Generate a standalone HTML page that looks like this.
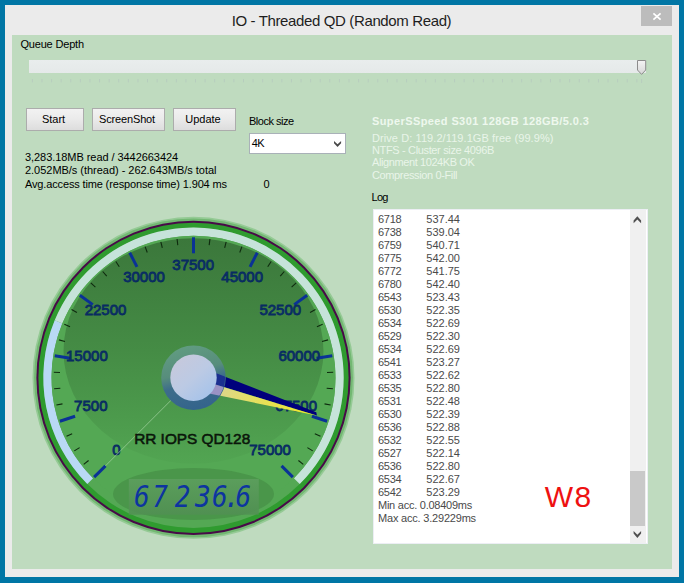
<!DOCTYPE html>
<html lang="en"><head><meta charset="utf-8"><title>IO - Threaded QD (Random Read)</title>
<style>
html,body{margin:0;padding:0}
body{width:684px;height:583px;overflow:hidden;position:relative;background:#0076a5;font-family:"Liberation Sans",Arial,sans-serif;font-size:11px;color:#000}
#frame{position:absolute;left:5px;top:5px;width:674px;height:572px;background:#ebebeb}
#content{position:absolute;left:12.3px;top:35.4px;width:659.3px;height:533.5px;background:#bfdbbf}
#close{position:absolute;left:641px;top:6px;width:31px;height:20px;background:#bcbcbc}
.btn{position:absolute;top:108px;height:21px;box-sizing:content-box;border:1px solid #acacac;background:linear-gradient(#f2f2f2,#ebebeb 45%,#dddddd);text-align:center;font-size:11px;line-height:20px;color:#000}
#track{position:absolute;left:28.5px;top:59.5px;width:617.5px;height:13.8px;background:linear-gradient(#e9eded,#e5e9e9)}
#combo{position:absolute;left:249px;top:133px;width:95px;height:19px;border:1px solid #a9b1b8;background:#fff}
#log{position:absolute;left:372.5px;top:209.3px;width:275px;height:335px;background:#fff;overflow:hidden;box-shadow:inset 0 0 0 1px #eceef4}
#log pre{margin:0;position:absolute;left:5.5px;top:4px;font-family:"Liberation Sans",Arial,sans-serif;font-size:11px;line-height:13px;color:#4a4a4a;}
#log pre i{display:inline-block;width:48.3px;font-style:normal;letter-spacing:-0.25px}
#sb{position:absolute;left:257.7px;top:1px;width:15.8px;height:333px;background:#f0f0f0}
#thumb{position:absolute;left:0;top:260.5px;width:14.7px;height:55.2px;background:#c9c9c9}
</style></head><body>
<div id="frame"></div><div id="content"></div>
<div style="position:absolute;white-space:pre;left:231.7px;top:11.60px;font-size:15px;line-height:18px;color:#1e1e1e;letter-spacing:-0.37px;">IO - Threaded QD (Random Read)</div>
<div id="close"><svg width="31" height="20" viewBox="0 0 31 20"><path d="M12.4,7.3 L19.6,13.7 M19.6,7.3 L12.4,13.7" stroke="#fff" stroke-width="1.7" fill="none"/></svg></div>
<div style="position:absolute;white-space:pre;left:20.4px;top:38.29px;font-size:11px;line-height:13px;color:#000;letter-spacing:-0.17px;">Queue Depth</div>
<div id="track"></div>
<svg width="684" height="90" style="position:absolute;left:0;top:0" fill="#b7cdbe"><rect x="31.90" y="79" width="1" height="3.4"/><rect x="41.49" y="79" width="1" height="3.4"/><rect x="51.09" y="79" width="1" height="3.4"/><rect x="60.68" y="79" width="1" height="3.4"/><rect x="70.28" y="79" width="1" height="3.4"/><rect x="79.87" y="79" width="1" height="3.4"/><rect x="89.46" y="79" width="1" height="3.4"/><rect x="99.06" y="79" width="1" height="3.4"/><rect x="108.65" y="79" width="1" height="3.4"/><rect x="118.25" y="79" width="1" height="3.4"/><rect x="127.84" y="79" width="1" height="3.4"/><rect x="137.43" y="79" width="1" height="3.4"/><rect x="147.03" y="79" width="1" height="3.4"/><rect x="156.62" y="79" width="1" height="3.4"/><rect x="166.22" y="79" width="1" height="3.4"/><rect x="175.81" y="79" width="1" height="3.4"/><rect x="185.40" y="79" width="1" height="3.4"/><rect x="195.00" y="79" width="1" height="3.4"/><rect x="204.59" y="79" width="1" height="3.4"/><rect x="214.19" y="79" width="1" height="3.4"/><rect x="223.78" y="79" width="1" height="3.4"/><rect x="233.37" y="79" width="1" height="3.4"/><rect x="242.97" y="79" width="1" height="3.4"/><rect x="252.56" y="79" width="1" height="3.4"/><rect x="262.16" y="79" width="1" height="3.4"/><rect x="271.75" y="79" width="1" height="3.4"/><rect x="281.34" y="79" width="1" height="3.4"/><rect x="290.94" y="79" width="1" height="3.4"/><rect x="300.53" y="79" width="1" height="3.4"/><rect x="310.13" y="79" width="1" height="3.4"/><rect x="319.72" y="79" width="1" height="3.4"/><rect x="329.31" y="79" width="1" height="3.4"/><rect x="338.91" y="79" width="1" height="3.4"/><rect x="348.50" y="79" width="1" height="3.4"/><rect x="358.10" y="79" width="1" height="3.4"/><rect x="367.69" y="79" width="1" height="3.4"/><rect x="377.28" y="79" width="1" height="3.4"/><rect x="386.88" y="79" width="1" height="3.4"/><rect x="396.47" y="79" width="1" height="3.4"/><rect x="406.07" y="79" width="1" height="3.4"/><rect x="415.66" y="79" width="1" height="3.4"/><rect x="425.25" y="79" width="1" height="3.4"/><rect x="434.85" y="79" width="1" height="3.4"/><rect x="444.44" y="79" width="1" height="3.4"/><rect x="454.04" y="79" width="1" height="3.4"/><rect x="463.63" y="79" width="1" height="3.4"/><rect x="473.22" y="79" width="1" height="3.4"/><rect x="482.82" y="79" width="1" height="3.4"/><rect x="492.41" y="79" width="1" height="3.4"/><rect x="502.01" y="79" width="1" height="3.4"/><rect x="511.60" y="79" width="1" height="3.4"/><rect x="521.19" y="79" width="1" height="3.4"/><rect x="530.79" y="79" width="1" height="3.4"/><rect x="540.38" y="79" width="1" height="3.4"/><rect x="549.98" y="79" width="1" height="3.4"/><rect x="559.57" y="79" width="1" height="3.4"/><rect x="569.16" y="79" width="1" height="3.4"/><rect x="578.76" y="79" width="1" height="3.4"/><rect x="588.35" y="79" width="1" height="3.4"/><rect x="597.95" y="79" width="1" height="3.4"/><rect x="607.54" y="79" width="1" height="3.4"/><rect x="617.13" y="79" width="1" height="3.4"/><rect x="626.73" y="79" width="1" height="3.4"/><rect x="636.32" y="79" width="1" height="3.4"/><rect x="641.1" y="79" width="1" height="4"/><defs><linearGradient id="gTh" x1="0" y1="0" x2="0" y2="1"><stop offset="0" stop-color="#f4f4f4"/><stop offset="1" stop-color="#d6d6d6"/></linearGradient></defs><path d="M637.5,60.5 H645.7 V70 L641.6,74.4 L637.5,70 Z" fill="url(#gTh)" stroke="#8c8c8c" stroke-width="1"/></svg>
<div class="btn" style="left:26px;width:53px;padding-right:3px">Start</div>
<div class="btn" style="left:92px;width:68px;padding-right:3px;letter-spacing:-0.15px">ScreenShot</div>
<div class="btn" style="left:173px;width:58px;padding-right:3px">Update</div>
<div style="position:absolute;white-space:pre;left:249px;top:115.09px;font-size:11px;line-height:13px;color:#000;letter-spacing:-0.5px;">Block size</div>
<div id="combo"><svg width="95" height="19" viewBox="0 0 95 19" style="position:absolute;left:0;top:0"><polygon points="84,6.9 87.55,10.3 91.1,6.9 91.1,9.3 87.55,12.9 84,9.3" fill="#484848"/></svg></div>
<div style="position:absolute;white-space:pre;left:251.8px;top:137.29px;font-size:11px;line-height:13px;color:#000;letter-spacing:-0.6px;">4K</div>
<div style="position:absolute;white-space:pre;left:25px;top:150.79px;font-size:11px;line-height:13px;color:#000;letter-spacing:-0.06px;">3,283.18MB read / 3442663424</div>
<div style="position:absolute;white-space:pre;left:25px;top:163.99px;font-size:11px;line-height:13px;color:#000;letter-spacing:-0.03px;">2.052MB/s (thread) - 262.643MB/s total</div>
<div style="position:absolute;white-space:pre;left:25px;top:178.29px;font-size:11px;line-height:13px;color:#000;letter-spacing:-0.145px;">Avg.access time (response time) 1.904 ms</div>
<div style="position:absolute;white-space:pre;left:263.6px;top:178.29px;font-size:11px;line-height:13px;color:#000;">0</div>
<div style="position:absolute;white-space:pre;left:372px;top:114.89px;font-size:11px;line-height:13px;color:#eef8ee;font-weight:bold;letter-spacing:0.4px;">SuperSSpeed S301 128GB 128GB/5.0.3</div>
<div style="position:absolute;white-space:pre;left:372px;top:132.49px;font-size:11px;line-height:13px;color:#e9f5e9;letter-spacing:0.08px;">Drive D: 119.2/119.1GB free (99.9%)</div>
<div style="position:absolute;white-space:pre;left:372px;top:144.29px;font-size:11px;line-height:13px;color:#e9f5e9;letter-spacing:-0.35px;">NTFS - Cluster size 4096B</div>
<div style="position:absolute;white-space:pre;left:372px;top:156.29px;font-size:11px;line-height:13px;color:#e9f5e9;letter-spacing:-0.4px;">Alignment 1024KB OK</div>
<div style="position:absolute;white-space:pre;left:372px;top:168.69px;font-size:11px;line-height:13px;color:#e9f5e9;letter-spacing:-0.37px;">Compression 0-Fill</div>
<div style="position:absolute;white-space:pre;left:371.5px;top:190.99px;font-size:11px;line-height:13px;color:#000;letter-spacing:-0.7px;">Log</div>
<div id="log"><pre><i>6718</i>537.44
<i>6738</i>539.04
<i>6759</i>540.71
<i>6775</i>542.00
<i>6772</i>541.75
<i>6780</i>542.40
<i>6543</i>523.43
<i>6530</i>522.35
<i>6534</i>522.69
<i>6529</i>522.30
<i>6534</i>522.69
<i>6541</i>523.27
<i>6533</i>522.62
<i>6535</i>522.80
<i>6531</i>522.48
<i>6530</i>522.39
<i>6536</i>522.88
<i>6532</i>522.55
<i>6527</i>522.14
<i>6536</i>522.80
<i>6534</i>522.67
<i>6542</i>523.29
<span style="letter-spacing:-0.25px">Min acc. 0.08409ms</span>
<span style="letter-spacing:-0.2px">Max acc. 3.29229ms</span></pre>
<div style="position:absolute;left:172.3px;top:270.1px;font-size:30px;line-height:36px;color:#ee1111;letter-spacing:1.5px">W8</div>
<div id="sb"><svg width="16" height="333" style="position:absolute;left:0;top:0"><polygon points="7.35,6.3 11.1,10.6 11.1,13.2 7.35,9.4 3.6,13.2 3.6,10.6" fill="#505050"/><polygon points="7.35,327.9 11.1,323.6 11.1,321 7.35,324.8 3.6,321 3.6,323.6" fill="#505050"/></svg><div id="thumb"></div></div>
</div>
<svg id="gauge" width="684" height="583" viewBox="0 0 684 583" style="position:absolute;left:0;top:0">
<defs>
<linearGradient id="gDark" gradientUnits="userSpaceOnUse" x1="0" y1="238" x2="0" y2="464">
  <stop offset="0" stop-color="#3b773b"/><stop offset="0.5" stop-color="#458c45"/><stop offset="0.75" stop-color="#4b984b"/><stop offset="1" stop-color="#52a552"/>
</linearGradient>
<linearGradient id="gHubRing" x1="0.37" y1="0" x2="0.63" y2="1">
  <stop offset="0" stop-color="#619c81"/><stop offset="0.40" stop-color="#578d7c"/><stop offset="0.58" stop-color="#3d6d8b"/><stop offset="1" stop-color="#33638c"/>
</linearGradient>
<linearGradient id="gHub" x1="0.15" y1="0.1" x2="0.85" y2="0.9">
  <stop offset="0" stop-color="#c6c9dc"/><stop offset="0.5" stop-color="#bccae4"/><stop offset="1" stop-color="#a6c3ea"/>
</linearGradient>
<linearGradient id="gLcd" x1="0" y1="0" x2="0" y2="1"><stop offset="0" stop-color="#5e9f5f"/><stop offset="1" stop-color="#518f53"/></linearGradient>
<linearGradient id="gYel" gradientUnits="userSpaceOnUse" x1="220" y1="386" x2="316" y2="415">
  <stop offset="0" stop-color="#dcd68c"/><stop offset="0.35" stop-color="#e4de62"/><stop offset="1" stop-color="#f0ea26"/>
</linearGradient>
<clipPath id="clipRing"><circle cx="193.5" cy="377.7" r="31.6"/></clipPath>
</defs>
<circle cx="193.5" cy="377.8" r="161" fill="#95ca95"/>
<circle cx="193.5" cy="377.8" r="159.4" fill="#72b872"/>
<circle cx="193.5" cy="377.8" r="157.1" fill="#480a48"/>
<circle cx="193.5" cy="377.8" r="155.1" fill="#2f9b2f"/>
<circle cx="193.5" cy="377.8" r="150.2" fill="#54a854"/>
<path d="M87.29,484.01 A150.2,150.2 0 0 1 54.73,320.32 L62.31,323.46 A142,142 0 0 0 93.09,478.21 Z" fill="#b9d9f5"/>
<path d="M54.73,320.32 A150.2,150.2 0 1 1 299.71,484.01 L293.91,478.21 A142,142 0 1 0 62.31,323.46 Z" fill="#c6e3da"/>
<circle cx="193.5" cy="377.8" r="142" fill="#54a854"/>
<ellipse cx="193.5" cy="351" rx="130" ry="112.7" fill="url(#gDark)"/>
<ellipse cx="193.5" cy="494" rx="80.5" ry="26" fill="#4a964a"/>
<rect x="128.8" y="479" width="130" height="35.7" fill="url(#gLcd)" opacity="0.85"/>
<line x1="105.47" y1="465.83" x2="94.15" y2="477.15" stroke="#0a3296" stroke-width="3"/>
<line x1="88.58" y1="460.51" x2="83.71" y2="464.35" stroke="#0e2a0e" stroke-width="1.1"/>
<line x1="79.59" y1="447.61" x2="74.30" y2="450.85" stroke="#0e2a0e" stroke-width="1.1"/>
<line x1="72.17" y1="433.73" x2="66.54" y2="436.33" stroke="#0e2a0e" stroke-width="1.1"/>
<line x1="75.09" y1="416.27" x2="59.88" y2="421.22" stroke="#0a3296" stroke-width="3"/>
<line x1="62.47" y1="403.86" x2="56.39" y2="405.07" stroke="#0e2a0e" stroke-width="1.1"/>
<line x1="60.31" y1="388.28" x2="54.13" y2="388.77" stroke="#0e2a0e" stroke-width="1.1"/>
<line x1="60.00" y1="372.55" x2="53.81" y2="372.31" stroke="#0e2a0e" stroke-width="1.1"/>
<line x1="70.53" y1="358.32" x2="54.73" y2="355.82" stroke="#0a3296" stroke-width="3"/>
<line x1="64.92" y1="341.54" x2="58.95" y2="339.85" stroke="#0e2a0e" stroke-width="1.1"/>
<line x1="70.07" y1="326.67" x2="64.34" y2="324.30" stroke="#0e2a0e" stroke-width="1.1"/>
<line x1="76.93" y1="312.52" x2="71.53" y2="309.49" stroke="#0e2a0e" stroke-width="1.1"/>
<line x1="92.78" y1="304.62" x2="79.83" y2="295.22" stroke="#0a3296" stroke-width="3"/>
<line x1="95.39" y1="287.11" x2="90.84" y2="282.90" stroke="#0e2a0e" stroke-width="1.1"/>
<line x1="106.73" y1="276.21" x2="102.71" y2="271.50" stroke="#0e2a0e" stroke-width="1.1"/>
<line x1="119.28" y1="266.72" x2="115.83" y2="261.56" stroke="#0e2a0e" stroke-width="1.1"/>
<line x1="136.98" y1="266.87" x2="129.71" y2="252.61" stroke="#0a3296" stroke-width="3"/>
<line x1="147.26" y1="252.46" x2="145.11" y2="246.64" stroke="#0e2a0e" stroke-width="1.1"/>
<line x1="162.31" y1="247.89" x2="160.86" y2="241.86" stroke="#0e2a0e" stroke-width="1.1"/>
<line x1="177.80" y1="245.13" x2="177.07" y2="238.97" stroke="#0e2a0e" stroke-width="1.1"/>
<line x1="193.50" y1="253.30" x2="193.50" y2="237.30" stroke="#0a3296" stroke-width="3"/>
<line x1="209.20" y1="245.13" x2="209.93" y2="238.97" stroke="#0e2a0e" stroke-width="1.1"/>
<line x1="224.69" y1="247.89" x2="226.14" y2="241.86" stroke="#0e2a0e" stroke-width="1.1"/>
<line x1="239.74" y1="252.46" x2="241.89" y2="246.64" stroke="#0e2a0e" stroke-width="1.1"/>
<line x1="250.02" y1="266.87" x2="257.29" y2="252.61" stroke="#0a3296" stroke-width="3"/>
<line x1="267.72" y1="266.72" x2="271.17" y2="261.56" stroke="#0e2a0e" stroke-width="1.1"/>
<line x1="280.27" y1="276.21" x2="284.29" y2="271.50" stroke="#0e2a0e" stroke-width="1.1"/>
<line x1="291.61" y1="287.11" x2="296.16" y2="282.90" stroke="#0e2a0e" stroke-width="1.1"/>
<line x1="294.22" y1="304.62" x2="307.17" y2="295.22" stroke="#0a3296" stroke-width="3"/>
<line x1="310.07" y1="312.52" x2="315.47" y2="309.49" stroke="#0e2a0e" stroke-width="1.1"/>
<line x1="316.93" y1="326.67" x2="322.66" y2="324.30" stroke="#0e2a0e" stroke-width="1.1"/>
<line x1="322.08" y1="341.54" x2="328.05" y2="339.85" stroke="#0e2a0e" stroke-width="1.1"/>
<line x1="316.47" y1="358.32" x2="332.27" y2="355.82" stroke="#0a3296" stroke-width="3"/>
<line x1="327.00" y1="372.55" x2="333.19" y2="372.31" stroke="#0e2a0e" stroke-width="1.1"/>
<line x1="326.69" y1="388.28" x2="332.87" y2="388.77" stroke="#0e2a0e" stroke-width="1.1"/>
<line x1="324.53" y1="403.86" x2="330.61" y2="405.07" stroke="#0e2a0e" stroke-width="1.1"/>
<line x1="311.91" y1="416.27" x2="327.12" y2="421.22" stroke="#0a3296" stroke-width="3"/>
<line x1="314.83" y1="433.73" x2="320.46" y2="436.33" stroke="#0e2a0e" stroke-width="1.1"/>
<line x1="307.41" y1="447.61" x2="312.70" y2="450.85" stroke="#0e2a0e" stroke-width="1.1"/>
<line x1="298.42" y1="460.51" x2="303.29" y2="464.35" stroke="#0e2a0e" stroke-width="1.1"/>
<line x1="281.53" y1="465.83" x2="292.85" y2="477.15" stroke="#0a3296" stroke-width="3"/>
<g font-family="'Liberation Sans', Arial, sans-serif" font-size="15" fill="#0a347c" stroke="#082a5e" stroke-width="0.8" text-anchor="middle">
<text x="116.3" y="454.8">0</text>
<text x="90.8" y="410.8">7500</text>
<text x="86.9" y="361.3">15000</text>
<text x="105.5" y="315">22500</text>
<text x="144" y="281.9">30000</text>
<text x="193.2" y="270.2">37500</text>
<text x="242.2" y="281.9">45000</text>
<text x="280.3" y="315">52500</text>
<text x="299.3" y="361.3">60000</text>
<text x="296.2" y="410.8">67500</text>
<text x="270.1" y="454.6">75000</text>
</g>
<line x1="172.29" y1="399.01" x2="105.47" y2="465.83" stroke="#a4d2a0" stroke-width="0.7"/>
<text x="192.2" y="444" font-family="'Liberation Sans', Arial, sans-serif" font-size="15" fill="#0a160a" stroke="#0a160a" stroke-width="0.55" text-anchor="middle" textLength="116" lengthAdjust="spacingAndGlyphs">RR IOPS QD128</text>
<polygon points="193.5,377.8 193.5,364.4 316.3,412.3 316.9,415.4" fill="#00007c"/>
<polygon points="193.5,377.8 193.5,390.2 316.6,415.5" fill="url(#gYel)"/>
<circle cx="193.5" cy="377.7" r="32.3" fill="url(#gHubRing)"/>
<g clip-path="url(#clipRing)"><polygon points="193.5,377.8 193.5,364.4 316.3,412.3 316.9,415.4" fill="#1b2f90"/><polygon points="193.5,377.8 193.5,390.2 316.6,415.5" fill="#9a92c4"/></g>
<circle cx="193.5" cy="377.7" r="23.2" fill="url(#gHub)"/>
<text transform="scale(1,1.145)" y="442.71" x="134.0 152.3 174.8 194.9 212.1 224.2 235.6" font-family="'DejaVu Sans Mono', 'Liberation Mono', monospace" font-style="italic" font-size="26" fill="#0d34a0">67236.6</text>
</svg>
</body></html>
